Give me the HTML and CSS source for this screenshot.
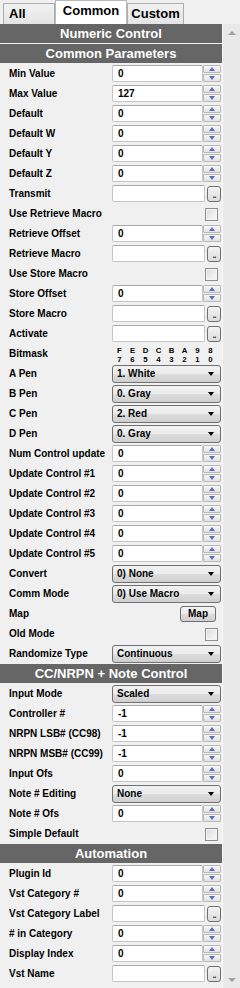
FILE: index.html
```html
<!DOCTYPE html>
<html>
<head>
<meta charset="utf-8">
<link rel="stylesheet" href="styles.css">
</head>
<body>
<div class="tabs">
  <div class="tab tab-all">All</div>
  <div class="tab tab-active">Common</div>
  <div class="tab tab-custom">Custom</div>
</div>
<div class="panel">
  <div class="content">
    <div class="hdr">Numeric Control</div>
    <div class="hdr">Common Parameters</div>

    <div class="row"><div class="lbl">Min Value</div><div class="num"><div class="field">0</div><div class="spin"><span class="up"></span><span class="dn"></span></div></div></div>
    <div class="row"><div class="lbl">Max Value</div><div class="num"><div class="field">127</div><div class="spin"><span class="up"></span><span class="dn"></span></div></div></div>
    <div class="row"><div class="lbl">Default</div><div class="num"><div class="field">0</div><div class="spin"><span class="up"></span><span class="dn"></span></div></div></div>
    <div class="row"><div class="lbl">Default W</div><div class="num"><div class="field">0</div><div class="spin"><span class="up"></span><span class="dn"></span></div></div></div>
    <div class="row"><div class="lbl">Default Y</div><div class="num"><div class="field">0</div><div class="spin"><span class="up"></span><span class="dn"></span></div></div></div>
    <div class="row"><div class="lbl">Default Z</div><div class="num"><div class="field">0</div><div class="spin"><span class="up"></span><span class="dn"></span></div></div></div>
    <div class="row"><div class="lbl">Transmit</div><div class="txt"><div class="field"></div><div class="ell">..</div></div></div>
    <div class="row"><div class="lbl">Use Retrieve Macro</div><div class="chkwrap"><div class="chk"></div></div></div>
    <div class="row"><div class="lbl">Retrieve Offset</div><div class="num"><div class="field">0</div><div class="spin"><span class="up"></span><span class="dn"></span></div></div></div>
    <div class="row"><div class="lbl">Retrieve Macro</div><div class="txt"><div class="field"></div><div class="ell">..</div></div></div>
    <div class="row"><div class="lbl">Use Store Macro</div><div class="chkwrap"><div class="chk"></div></div></div>
    <div class="row"><div class="lbl">Store Offset</div><div class="num"><div class="field">0</div><div class="spin"><span class="up"></span><span class="dn"></span></div></div></div>
    <div class="row"><div class="lbl">Store Macro</div><div class="txt"><div class="field"></div><div class="ell">..</div></div></div>
    <div class="row"><div class="lbl">Activate</div><div class="txt"><div class="field"></div><div class="ell">..</div></div></div>
    <div class="row"><div class="lbl">Bitmask</div>
      <div class="bits">
        <span>F</span><span>E</span><span>D</span><span>C</span><span>B</span><span>A</span><span>9</span><span>8</span>
        <span>7</span><span>6</span><span>5</span><span>4</span><span>3</span><span>2</span><span>1</span><span>0</span>
      </div>
    </div>
    <div class="row"><div class="lbl">A Pen</div><div class="dd">1. White<span class="arr"></span></div></div>
    <div class="row"><div class="lbl">B Pen</div><div class="dd">0. Gray<span class="arr"></span></div></div>
    <div class="row"><div class="lbl">C Pen</div><div class="dd">2. Red<span class="arr"></span></div></div>
    <div class="row"><div class="lbl">D Pen</div><div class="dd">0. Gray<span class="arr"></span></div></div>
    <div class="row"><div class="lbl">Num Control update</div><div class="num"><div class="field">0</div><div class="spin"><span class="up"></span><span class="dn"></span></div></div></div>
    <div class="row"><div class="lbl">Update Control #1</div><div class="num"><div class="field">0</div><div class="spin"><span class="up"></span><span class="dn"></span></div></div></div>
    <div class="row"><div class="lbl">Update Control #2</div><div class="num"><div class="field">0</div><div class="spin"><span class="up"></span><span class="dn"></span></div></div></div>
    <div class="row"><div class="lbl">Update Control #3</div><div class="num"><div class="field">0</div><div class="spin"><span class="up"></span><span class="dn"></span></div></div></div>
    <div class="row"><div class="lbl">Update Control #4</div><div class="num"><div class="field">0</div><div class="spin"><span class="up"></span><span class="dn"></span></div></div></div>
    <div class="row"><div class="lbl">Update Control #5</div><div class="num"><div class="field">0</div><div class="spin"><span class="up"></span><span class="dn"></span></div></div></div>
    <div class="row"><div class="lbl">Convert</div><div class="dd">0) None<span class="arr"></span></div></div>
    <div class="row"><div class="lbl">Comm Mode</div><div class="dd">0) Use Macro<span class="arr"></span></div></div>
    <div class="row"><div class="lbl">Map</div><div class="btnwrap"><div class="btn">Map</div></div></div>
    <div class="row"><div class="lbl">Old Mode</div><div class="chkwrap"><div class="chk"></div></div></div>
    <div class="row"><div class="lbl">Randomize Type</div><div class="dd">Continuous<span class="arr"></span></div></div>

    <div class="hdr">CC/NRPN + Note Control</div>
    <div class="row"><div class="lbl">Input Mode</div><div class="dd">Scaled<span class="arr"></span></div></div>
    <div class="row"><div class="lbl">Controller #</div><div class="num"><div class="field">-1</div><div class="spin"><span class="up"></span><span class="dn"></span></div></div></div>
    <div class="row"><div class="lbl">NRPN LSB# (CC98)</div><div class="num"><div class="field">-1</div><div class="spin"><span class="up"></span><span class="dn"></span></div></div></div>
    <div class="row"><div class="lbl">NRPN MSB# (CC99)</div><div class="num"><div class="field">-1</div><div class="spin"><span class="up"></span><span class="dn"></span></div></div></div>
    <div class="row"><div class="lbl">Input Ofs</div><div class="num"><div class="field">0</div><div class="spin"><span class="up"></span><span class="dn"></span></div></div></div>
    <div class="row"><div class="lbl">Note # Editing</div><div class="dd">None<span class="arr"></span></div></div>
    <div class="row"><div class="lbl">Note # Ofs</div><div class="num"><div class="field">0</div><div class="spin"><span class="up"></span><span class="dn"></span></div></div></div>
    <div class="row"><div class="lbl">Simple Default</div><div class="chkwrap"><div class="chk"></div></div></div>

    <div class="hdr">Automation</div>
    <div class="row"><div class="lbl">Plugin Id</div><div class="num"><div class="field">0</div><div class="spin"><span class="up"></span><span class="dn"></span></div></div></div>
    <div class="row"><div class="lbl">Vst Category #</div><div class="num"><div class="field">0</div><div class="spin"><span class="up"></span><span class="dn"></span></div></div></div>
    <div class="row"><div class="lbl">Vst Category Label</div><div class="txt"><div class="field"></div><div class="ell">..</div></div></div>
    <div class="row"><div class="lbl"># in Category</div><div class="num"><div class="field">0</div><div class="spin"><span class="up"></span><span class="dn"></span></div></div></div>
    <div class="row"><div class="lbl">Display Index</div><div class="num"><div class="field">0</div><div class="spin"><span class="up"></span><span class="dn"></span></div></div></div>
    <div class="row"><div class="lbl">Vst Name</div><div class="txt"><div class="field"></div><div class="ell">..</div></div></div>
  </div>
  <div class="scroll">
    <div class="sarr sarr-up"></div>
    <div class="strack"></div>
    <div class="sarr sarr-dn"></div>
  </div>
</div>
</body>
</html>
```

FILE: styles.css
```css
* { box-sizing: border-box; }
html, body { margin: 0; padding: 0; }
body {
  width: 240px;
  height: 988px;
  overflow: hidden;
  background: #f0f0f0;
  font-family: "Liberation Sans", Arial, sans-serif;
  font-weight: bold;
  font-size: 10px;
  color: #000;
}
.tabs {
  height: 24px;
  display: flex;
  align-items: flex-end;
  padding-left: 3px;
}
.tab {
  font-size: 13px;
  height: 21px;
  border: 1px solid #acacac;
  border-bottom: none;
  background: linear-gradient(#f2f2f2, #e4e4e4);
  line-height: 20px;
}
.tab-all { width: 52px; padding-left: 5px; }
.tab-active {
  width: 72px;
  height: 24px;
  background: #fff;
  text-align: center;
  line-height: 20px;
  border-color: #b8b8b8;
}
.tab-custom { width: 57px; text-align: center; }

.panel {
  display: flex;
  height: 964px;
}
.content {
  width: 222px;
}
.hdr {
  height: 19px;
  margin-bottom: 1px;
  background: #666;
  color: #fff;
  font-size: 13px;
  line-height: 19px;
  text-align: center;
}
.row {
  height: 20px;
  display: flex;
  align-items: center;
}
.lbl {
  width: 112px;
  padding-left: 9px;
  line-height: 20px;
  white-space: nowrap;
}
.num, .txt {
  display: flex;
  height: 17px;
  margin-top: -1px;
}
.field {
  background: #fff;
  border: 1px solid #c4c4c4;
  border-top-color: #a8a8a8;
  border-radius: 2px;
  height: 17px;
  padding-left: 5px;
  line-height: 15px;
}
.num .field { width: 91px; }
.txt .field { width: 93px; }
.spin {
  width: 18px;
  display: flex;
  flex-direction: column;
  justify-content: space-between;
}
.spin span {
  height: 8px;
  border: 1px solid #b9b9b9;
  border-radius: 1px;
  background: linear-gradient(#f8f8f8, #e2e2e2);
  display: flex;
  align-items: center;
  justify-content: center;
}
.spin span::after {
  content: "";
  width: 0;
  height: 0;
  border-left: 3.5px solid transparent;
  border-right: 3.5px solid transparent;
}
.spin .up::after { border-bottom: 4px solid #5671b8; }
.spin .dn::after { border-top: 4px solid #5671b8; }
.ell {
  width: 14px;
  height: 16px;
  margin-left: 2px;
  margin-top: 1px;
  border: 1px solid #707070;
  border-radius: 3px;
  background: linear-gradient(#f4f4f4, #dcdcdc);
  font-size: 9px;
  line-height: 16px;
  text-align: center;
  letter-spacing: -1px;
  color: #333;
}
.chkwrap {
  width: 110px;
  display: flex;
  justify-content: flex-end;
  padding-right: 4px;
}
.chk {
  width: 13px;
  height: 13px;
  border: 1px solid #8e8f8f;
  background: linear-gradient(135deg, #dcdcdc, #fbfbfb);
  box-shadow: inset 0 0 0 1px #f4f4f4;
}
.bits {
  display: grid;
  grid-template-columns: repeat(8, 13px);
  grid-template-rows: 9px 9px;
  margin-left: 1px;
  margin-top: 1px;
  font-size: 7.8px;
  line-height: 9px;
  text-align: center;
}
.dd {
  position: relative;
  width: 109px;
  height: 18px;
  border: 1px solid #707070;
  border-radius: 3px;
  background: linear-gradient(#f2f2f2 0%, #ebebeb 50%, #dddddd 51%, #cfcfcf 100%);
  padding-left: 4px;
  line-height: 16px;
}
.arr {
  position: absolute;
  right: 6px;
  top: 6px;
  width: 0;
  height: 0;
  border-left: 3.5px solid transparent;
  border-right: 3.5px solid transparent;
  border-top: 4px solid #000;
}
.btnwrap {
  width: 109px;
  display: flex;
  justify-content: flex-end;
  padding-right: 5px;
}
.btn {
  width: 36px;
  height: 16px;
  border: 1px solid #707070;
  border-radius: 3px;
  background: linear-gradient(#f2f2f2 0%, #ebebeb 50%, #dddddd 51%, #cfcfcf 100%);
  text-align: center;
  line-height: 14px;
}
.scroll {
  width: 18px;
  display: flex;
  flex-direction: column;
  background: #e9e9e9;
  border-left: 1px solid #f8f8f8;
}
.sarr {
  height: 17px;
  display: flex;
  align-items: center;
  justify-content: center;
}
.sarr::after {
  content: "";
  width: 0;
  height: 0;
  border-left: 4px solid transparent;
  border-right: 4px solid transparent;
}
.sarr-up::after { border-bottom: 4px solid #a3a3a3; }
.sarr-dn::after { border-top: 4px solid #a3a3a3; }
.strack { flex: 1; }
```
